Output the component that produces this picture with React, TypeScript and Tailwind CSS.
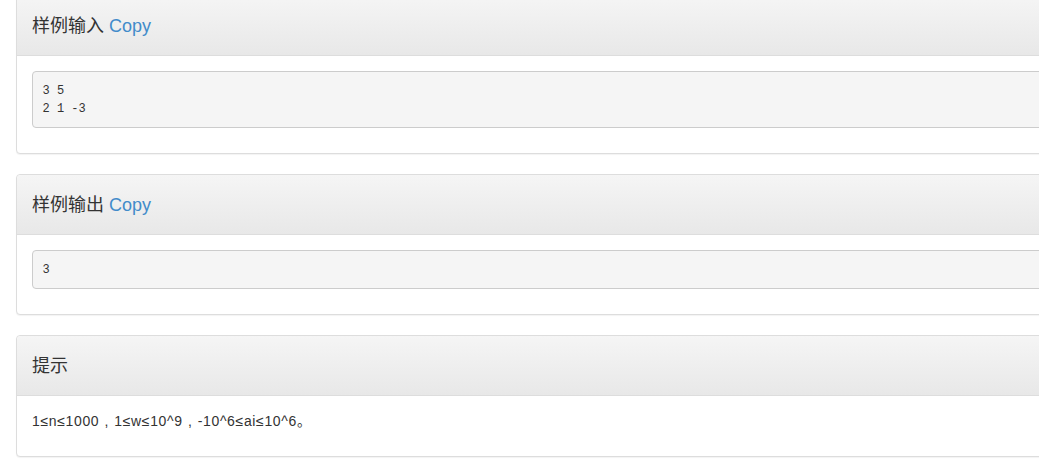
import React from 'react';

const samples = [
  { title: '样例输入', copy: true, lines: ['3 5', '2 1 -3'] },
  { title: '样例输出', copy: true, lines: ['3'] },
];

function PanelHeading({ title, copy }: { title: string; copy?: boolean }) {
  return (
    <div className="h-[60px] flex items-center px-[15px] border-b border-[#ddd] rounded-t-[4px] bg-gradient-to-b from-[#f5f5f5] to-[#e8e8e8]">
      <h3 className="text-[18px] leading-[20px] text-[#333]">
        {title} {copy && <a className="text-[#428bca] cursor-pointer">Copy</a>}
      </h3>
    </div>
  );
}

const Comma = () => <span className="inline-block w-[15px] text-center">,</span>;

export default function App() {
  return (
    <div className="h-[471px] w-[1039px] overflow-hidden bg-white font-['Liberation_Sans','Noto_Sans_CJK_SC',sans-serif] text-[14px] text-[#333]">
      <div className="-mt-[5px] ml-[16px] w-[1100px] flex flex-col gap-[20px]">
        {samples.map((s) => (
          <div key={s.title} className="border border-[#ddd] rounded-[4px] bg-white shadow-[0_1px_1px_rgba(0,0,0,0.05)]">
            <PanelHeading title={s.title} copy={s.copy} />
            <div className="p-[15px]">
              <pre className="mb-[10px] p-[9.5px] bg-[#f5f5f5] border border-[#ccc] rounded-[4px] font-['Liberation_Mono',monospace] text-[12px] leading-[18px] text-[#333]">
                {s.lines.join('\n')}
              </pre>
            </div>
          </div>
        ))}
        <div className="border border-[#ddd] rounded-[4px] bg-white shadow-[0_1px_1px_rgba(0,0,0,0.05)]">
          <PanelHeading title="提示" />
          <div className="p-[15px]">
            <p className="mb-[10px] leading-[20px] tracking-[0.65px]">
              1≤n≤1000<Comma />1≤w≤10^9<Comma />-10^6≤ai≤10^6。
            </p>
          </div>
        </div>
      </div>
    </div>
  );
}
